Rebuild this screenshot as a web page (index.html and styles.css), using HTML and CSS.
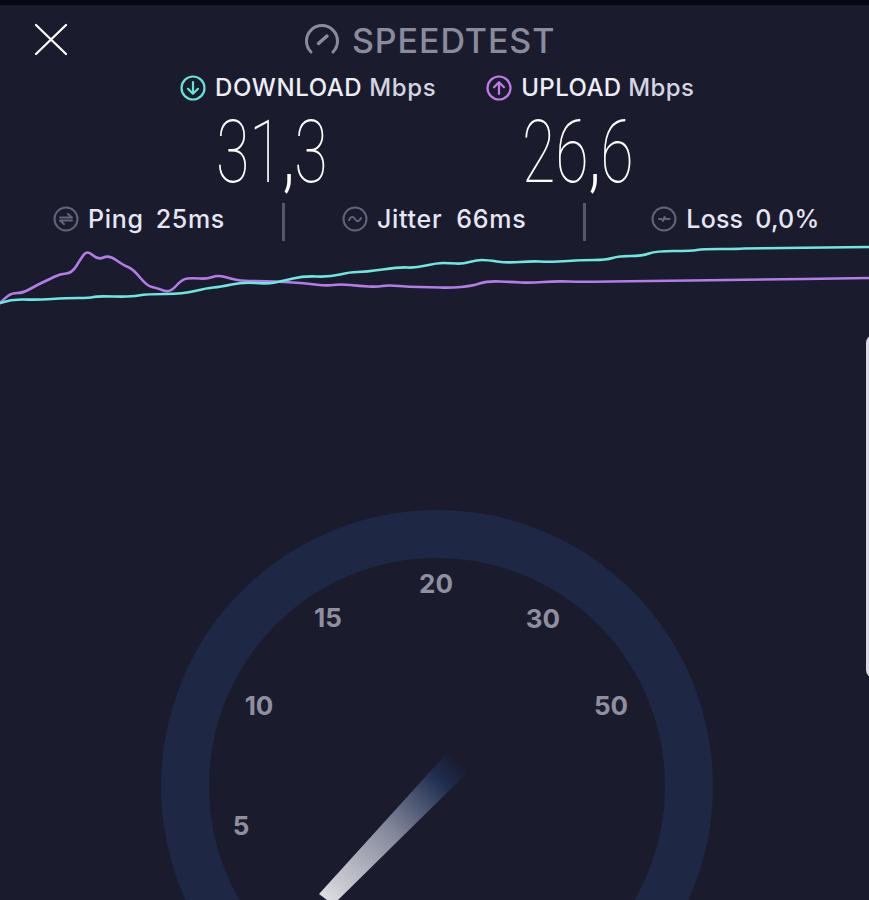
FILE: index.html
```html
<!DOCTYPE html>
<html lang="en">
<head>
    <meta charset="UTF-8">
    <meta name="viewport" content="width=device-width, initial-scale=1.0">
    <title>Speedtest</title>
    <link rel="stylesheet" href="styles.css">
</head>
<body>
    <div class="page">
        <div class="status-strip"></div>

        <header class="header">
            <svg class="close-icon" width="36" height="36" viewBox="0 0 36 36">
                <path d="M3 3 L33 32 M33 3 L3 32" />
            </svg>
            <div class="brand">
                <svg class="brand-icon" width="38" height="34" viewBox="0 0 38 34">
                    <path class="brand-arc" d="M8 29 A15.5 15.5 0 1 1 30 29" />
                    <path class="brand-needle" d="M15.5 20.5 L24 13" />
                </svg>
                <span class="brand-name">SPEEDTEST</span>
            </div>
        </header>

        <section class="speeds">
            <div class="speed">
                <div class="speed-label">
                    <svg class="speed-icon download" width="26" height="26" viewBox="0 0 26 26">
                        <circle cx="13" cy="13" r="11.5" />
                        <path d="M13 7 V18.5 M8 13.8 L13 18.8 L18 13.8" />
                    </svg>
                    <span>DOWNLOAD <b>Mbps</b></span>
                </div>
                <div class="speed-value"><span>31<i>,</i>3</span></div>
            </div>
            <div class="speed">
                <div class="speed-label upload-label">
                    <svg class="speed-icon upload" width="26" height="26" viewBox="0 0 26 26">
                        <circle cx="13" cy="13" r="11.5" />
                        <path d="M13 19 V7.5 M8 12.2 L13 7.2 L18 12.2" />
                    </svg>
                    <span>UPLOAD <b>Mbps</b></span>
                </div>
                <div class="speed-value"><span>26<i>,</i>6</span></div>
            </div>
        </section>

        <section class="stats">
            <div class="stat">
                <svg class="stat-icon" width="26" height="26" viewBox="0 0 26 26">
                    <circle cx="13" cy="13" r="11.5" />
                    <path d="M7 11.5 H19 L15 8 M19 14.5 H7 L11 18" />
                </svg>
                <span>Ping</span><span>25ms</span>
            </div>
            <div class="divider"></div>
            <div class="stat stat-jitter">
                <svg class="stat-icon" width="26" height="26" viewBox="0 0 26 26">
                    <circle cx="13" cy="13" r="11.5" />
                    <path d="M7 14 C9 10 11 10 13 13 C15 16 17 16 19 12" />
                </svg>
                <span>Jitter</span><span>66ms</span>
            </div>
            <div class="divider"></div>
            <div class="stat stat-loss">
                <svg class="stat-icon" width="26" height="26" viewBox="0 0 26 26">
                    <circle cx="13" cy="13" r="11.5" />
                    <path d="M8 13 H10.5 L12 15 L13.5 11 L14.5 13 M16 13 H18.5" />
                </svg>
                <span>Loss</span><span>0,0%</span>
            </div>
        </section>

        <svg class="chart" width="869" height="80" viewBox="0 235 869 80">
            <path class="line-upload" d="M0,303 Q5,298 8.5,295.5 T17.5,293 T30,289 T43.5,282 T55,276.5 T66,273.5 T76,266.5 T83.5,255 T92.5,255 T103.5,257.5 T116,260 T128,267 T140,277.5 T152,287 T163.5,290.5 T176,286 T187.5,278.5 T200,278.5 T212.5,277 T225,277 T237.5,280 T255,281 T275,281.5 T293,282.5 T315,284.5 T333.5,285 T350,285 T368.5,286.5 T382.5,286 T399,286 T420,287 T440,287.5 T461,287 T479.5,283.5 T500,281.5 T521.5,282.5 T543.5,282 T568.5,281.5 T610,281.5 T690,280.5 T804.5,279 L869,278" />
            <path class="line-download" d="M0,303 Q12,299 24.5,299.5 T52,299 T78.5,298 T93.5,297 T113.5,296.5 T138.5,295.5 T165,294 T195,291 T213.5,287.5 T231.5,284.5 T255,283 T275,282.5 T293,278.5 T316.5,276.5 T340,274.5 T357.5,272 T382.5,269.5 T407.5,267.5 T426,265.5 T443.5,263 T456,263.5 T469.5,262 T482,260 T497,261.5 T520,262 T540,261.5 T558,261.5 T575.5,260.5 T594,260 T612.5,258 T630.5,256 T649,253.5 T674,251 T697,250 T720.5,249 T744,248.5 L869,247" />
        </svg>

        <svg class="gauge" width="869" height="400" viewBox="0 500 869 400">
            <defs>
                <linearGradient id="needleFade" gradientUnits="userSpaceOnUse" x1="325" y1="897" x2="458" y2="762">
                    <stop offset="0" stop-color="#dcdcdf" />
                    <stop offset="0.5" stop-color="#82869a" />
                    <stop offset="0.86" stop-color="#202e50" />
                    <stop offset="1" stop-color="#1a1c30" />
                </linearGradient>
            </defs>
            <circle class="gauge-ring" cx="437" cy="786" r="252" />
            <text x="436" y="593">20</text>
            <text x="328" y="627">15</text>
            <text x="543" y="628">30</text>
            <text x="259" y="715">10</text>
            <text x="611" y="715">50</text>
            <text x="241" y="835">5</text>
            <polygon points="319,894 447,753 467,773 338,900 327,900" fill="url(#needleFade)" />
        </svg>

        <div class="edge-handle"></div>
    </div>
</body>
</html>
```

FILE: styles.css
```css
body {
    margin: 0;
    background-color: #1a1c2e;
    font-family: 'Inter', sans-serif;
    color: #eeeef6;
}

.page {
    position: relative;
    width: 869px;
    height: 900px;
    overflow: hidden;
}

.status-strip {
    height: 5px;
    background-color: #070815;
}

.header {
    display: flex;
    align-items: center;
    height: 58px;
    padding-top: 6px;
    padding-left: 33px;
}

.close-icon path {
    fill: none;
    stroke: #ffffff;
    stroke-width: 2.3;
    stroke-linecap: round;
}

.brand {
    display: flex;
    align-items: center;
    gap: 11px;
    margin-left: 234px;
}

.brand-icon {
    fill: none;
    stroke: #8a8c9e;
    stroke-linecap: round;
}

.brand-arc {
    stroke-width: 3;
}

.brand-needle {
    stroke-width: 3.4;
}

.brand-name {
    font-size: 34px;
    font-weight: 500;
    letter-spacing: 0.9px;
    color: #8a8c9e;
}

.speeds {
    display: flex;
    gap: 50px;
    padding-left: 180px;
    margin-top: 4px;
}

.speed-label {
    display: flex;
    align-items: center;
    gap: 9px;
    font-size: 24px;
    font-weight: 500;
    letter-spacing: 0.6px;
    line-height: 30px;
}

.upload-label {
    letter-spacing: 0.4px;
}

.speed-label b {
    font-weight: 500;
    color: #d4d5e2;
}

.speed-icon {
    fill: none;
    stroke-width: 2.2;
    stroke-linecap: round;
    stroke-linejoin: round;
}

.speed-icon.download {
    stroke: #62e4d8;
}

.speed-icon.upload {
    stroke: #c07ae8;
}

.speed-value {
    height: 84px;
    margin-top: 7px;
    padding-left: 36px;
    font-family: 'Roboto', sans-serif;
    font-size: 87px;
    font-weight: 100;
    line-height: 84px;
    color: #ffffff;
}

.speed-value span {
    display: inline-block;
    transform: scaleX(0.7);
    transform-origin: left center;
}

.speed-value i {
    font-style: normal;
    font-weight: 300;
}

.stats {
    display: flex;
    align-items: center;
    gap: 57px;
    height: 38px;
    padding-left: 53px;
    margin-top: 6px;
}

.stat {
    display: flex;
    align-items: center;
    gap: 12px;
    font-size: 25px;
    font-weight: 500;
    letter-spacing: 0.7px;
    color: #e6e6f4;
}

.stat-icon {
    margin-right: -3px;
    fill: none;
    stroke: #62657a;
    stroke-width: 2;
    stroke-linecap: round;
    stroke-linejoin: round;
}

.divider {
    width: 3px;
    height: 38px;
    margin-top: 6px;
    background-color: #55576a;
}

.stat-jitter {
    gap: 14px;
}

.stat-jitter .stat-icon {
    margin-right: -5px;
}

.stat-loss {
    margin-left: 8px;
    letter-spacing: 0.2px;
}

.chart {
    display: block;
    margin-top: -3px;
}

.chart path {
    fill: none;
    stroke-width: 2.6;
    stroke-linecap: round;
}

.line-upload {
    stroke: #b57be6;
}

.line-download {
    stroke: #70e6e0;
}

.gauge {
    position: absolute;
    left: 0;
    top: 500px;
}

.gauge-ring {
    fill: none;
    stroke: #1e2743;
    stroke-width: 48;
}

.gauge text {
    font-size: 26px;
    font-weight: 700;
    text-anchor: middle;
    fill: #8f8f9f;
}

.edge-handle {
    position: absolute;
    right: -8px;
    top: 335px;
    width: 8px;
    height: 343px;
    margin-right: 3px;
    border-radius: 8px 0 0 8px;
    background-color: #dcdce4;
}
```
